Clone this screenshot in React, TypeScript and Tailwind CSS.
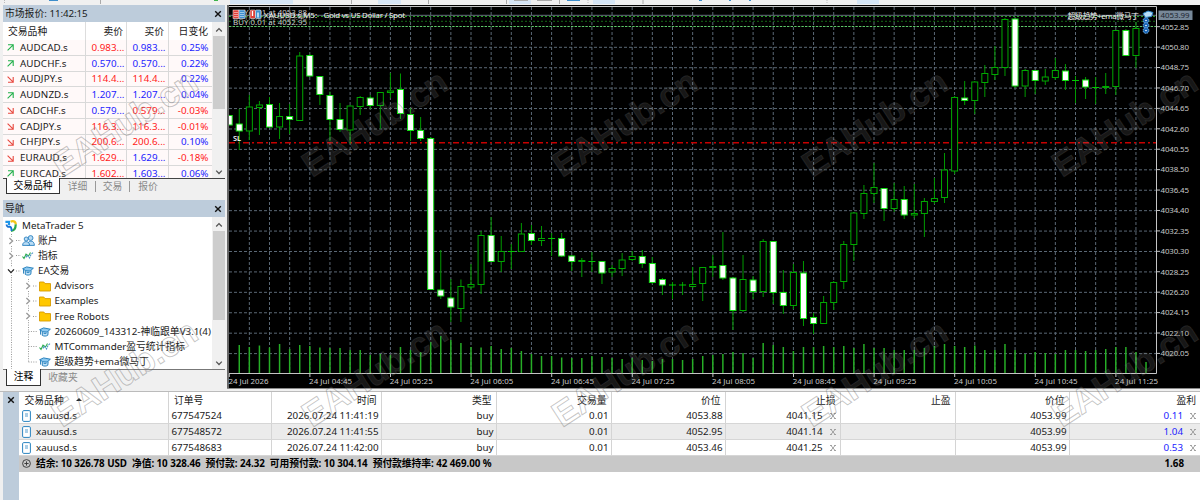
import { ReactNode } from 'react'
import clsx from 'clsx'

type Quote = [symbol: string, up: boolean, bid: string, bidUp: boolean, ask: string, askUp: boolean, change: string]

const quotes: Quote[] = [
  ['AUDCAD.s', true, '0.983...', false, '0.983...', true, '0.25%'],
  ['AUDCHF.s', true, '0.570...', true, '0.570...', true, '0.22%'],
  ['AUDJPY.s', false, '114.4...', false, '114.4...', false, '0.22%'],
  ['AUDNZD.s', true, '1.207...', true, '1.207...', true, '0.04%'],
  ['CADCHF.s', false, '0.579...', true, '0.579...', false, '-0.03%'],
  ['CADJPY.s', false, '116.3...', false, '116.3...', false, '-0.01%'],
  ['CHFJPY.s', false, '200.6...', false, '200.6...', false, '0.10%'],
  ['EURAUD.s', false, '1.629...', false, '1.629...', true, '-0.18%'],
  ['EURCAD.s', true, '1.602...', false, '1.603...', true, '0.06%'],
]

// [high, top, bottom, low, filled] in chart pixels
const candles: [number, number, number, number, number][] = [
  [115, 115.5, 125, 125, 1], [109, 124, 131, 150, 1], [95, 107, 131, 140, 0], [101, 105, 107.5, 135, 0],
  [97, 104.5, 127, 128, 1], [103, 116.5, 127, 139, 0], [104, 116.5, 119.5, 134, 1], [52, 56, 120.5, 121, 0],
  [54, 55.5, 76, 77, 1], [76, 76.5, 94.5, 105, 1], [91.5, 95.5, 119.5, 141, 1], [103, 119.5, 129.5, 132, 1],
  [105, 106, 130, 144, 0], [96, 97.5, 106.5, 115, 0], [95, 98, 105.5, 109, 1], [92, 92.5, 105.5, 129, 0],
  [73, 91, 92.5, 98, 0], [73.5, 89.5, 113.5, 119, 1], [108, 114.5, 130.5, 141, 1], [117, 130.5, 138.5, 141, 1],
  [137, 138.5, 289.5, 290, 1], [250, 290, 296, 299, 1], [279, 298, 307, 322, 1], [279.5, 286.5, 308.5, 322, 0],
  [264, 284.5, 287, 289, 0], [231, 235.5, 284.5, 294, 0], [217, 235.5, 261.5, 262, 1], [236, 251.5, 261.5, 272, 0],
  [244, 251.5, 251.5, 269, 0], [223, 234, 251.5, 252, 0], [225, 233.5, 240.5, 245, 1], [226, 238.5, 240.5, 246, 0],
  [233, 238.5, 238.5, 256, 0], [233, 238.5, 256, 257, 1], [255, 256, 261.5, 271, 1], [258, 260.5, 261.5, 277, 0],
  [252, 261.5, 261.5, 272, 0], [261, 261.5, 273, 284, 1], [265, 268.5, 272, 277, 0], [253, 260, 268.5, 276, 0],
  [251, 256.5, 259.5, 261, 0], [250, 256.5, 263.5, 268, 1], [257, 263.5, 282.5, 284, 1], [278, 279.5, 285, 295, 1],
  [282, 285, 285, 299, 0], [282, 285, 285, 295, 0], [267, 284.5, 286.5, 288, 0], [267, 267.5, 283.5, 301, 0],
  [255, 266.5, 267.5, 277, 0], [232, 265.5, 278, 280, 1], [277, 278, 310.5, 330, 1], [255, 279.5, 310.5, 312, 0],
  [276, 280, 291.5, 299, 1], [239, 241.5, 291.5, 297, 0], [241, 241.5, 292.5, 304, 1], [270, 292.5, 305.5, 314, 1],
  [264, 272.5, 305.5, 309, 0], [261, 273, 318.5, 326, 1], [313, 317.5, 323.5, 334, 1], [296, 302.5, 323.5, 324, 0],
  [281, 282.5, 302.5, 310, 0], [241, 244.5, 281.5, 289, 0], [212, 213, 244.5, 261, 0], [185, 193.5, 213.5, 219, 0],
  [163, 187.5, 193.5, 203, 0], [188, 188.5, 208.5, 221, 1], [183, 199.5, 208.5, 212, 0], [186, 199.5, 215, 219, 1],
  [184, 213.5, 215, 218, 0], [198, 201.5, 213.5, 237, 0], [178, 198.5, 201.5, 204, 0], [153, 170, 197.5, 203, 0],
  [96, 97.5, 171, 174, 0], [81, 98, 100.5, 105, 1], [81, 82, 100.5, 114, 0], [65, 73.5, 82.5, 97, 0],
  [46, 67.5, 74.5, 80, 0], [18, 19.5, 67.5, 76, 0], [18, 19, 86, 88, 1], [69, 70.5, 86, 97, 0],
  [70, 70.5, 80.5, 94, 1], [69, 77, 81, 85, 0], [58, 70.5, 77.5, 80, 0], [64, 71, 80.5, 90, 1],
  [76, 80.5, 80.5, 103, 0], [77, 80, 87, 99, 1], [77, 87.5, 87.5, 104, 0], [73, 86.5, 87.5, 94, 0],
  [30, 30.5, 86.5, 95, 0], [29, 30.5, 55.5, 56, 1], [22, 28.5, 55.5, 68, 0],
]

const volumes = [
  345, 347, 345.5, 347.5, 344, 349, 345, 346, 347.5, 348, 348, 350, 350, 355, 354, 355, 347, 350, 352, 342, 336, 340,
  343, 347, 347.5, 346, 349, 348, 351, 354, 356, 356, 357.5, 358, 358, 356, 357, 358, 359, 358, 360, 361, 359, 359,
  360, 359, 356, 355, 354, 352, 353, 358, 343, 345, 347, 351, 347, 347, 346, 347, 346, 348, 344, 348, 348, 350, 350,
  350, 348, 346, 344, 346, 347, 345.5, 350, 350, 344, 350, 354, 352, 353, 354, 350, 350, 351, 350, 349, 347, 347, 352,
  362,
]

const times = ['2026', '04:45', '05:25', '06:05', '06:45', '07:25', '08:05', '08:45', '09:25', '10:05', '10:45', '11:25']

const barX = (i: number) => 229.2 + i * 10.075

const CloseIcon = ({ className }: { className?: string }) => (
  <svg className={clsx('size-2 shrink-0', className)} viewBox="0 0 8 8" stroke="#111" strokeWidth="1.4">
    <path d="M1.2 1.2 6.8 6.8M6.8 1.2 1.2 6.8" />
  </svg>
)

const Chevron = ({ d, color = '#555' }: { d: string; color?: string }) => (
  <svg className="size-[8px] shrink-0" viewBox="0 0 8 8" fill="none" stroke={color} strokeWidth="1.3">
    <path d={d} />
  </svg>
)

const Arrow = ({ up }: { up: boolean }) => (
  <svg
    className="ml-[4px] mr-[6px] size-[7px] shrink-0"
    viewBox="0 0 7 7"
    fill="none"
    stroke={up ? '#22b04b' : '#e8483f'}
    strokeWidth="1.1"
  >
    <path d={up ? 'M1 .8H6.2V6M6.2 .8.6 6.4' : 'M1 6.2H6.2V1M6.2 6.2.6.6'} />
  </svg>
)

const CapIcon = () => (
  <svg className="h-[10px] w-[12px]" viewBox="0 0 13 11" fill="#8cc8f0" stroke="#1878b8" strokeWidth="1">
    <path d="M3.5 5V9.2C5.5 10.4 8 10.2 9.6 9L10 5" fill="#c2e2f8" />
    <path d="M.6 3 5 1 12.4 2.4 8.8 5.6 4 5.2Z" />
    <path d="M1.6 3.6V8.4M5 7H8" fill="none" />
  </svg>
)

const WaveIcon = () => (
  <svg className="h-[9px] w-[12px]" viewBox="0 0 12 9" fill="none" strokeWidth="1.1">
    <path d="M.5 5.5 2 7.5 4 3.2 6.5 5 8.5 1.5" stroke="#2fae50" />
    <path d="M4 6.5 5 4 7.5 7 9 3.5 11.5 1" stroke="#4a94c4" strokeDasharray="2 .8" />
  </svg>
)

const FolderIcon = () => (
  <svg className="h-[11px] w-[12px]" viewBox="0 0 12 11" fill="#ffc800" stroke="#d89c00" strokeWidth=".9">
    <path d="M.5 1H4.8L6 2.6H11.5V10H.5Z" />
  </svg>
)

const UsersIcon = () => (
  <svg className="h-[11px] w-[13px]" viewBox="0 0 13 11" fill="#b9dcf5" stroke="#2a80bf" strokeWidth=".9">
    <circle cx="8.6" cy="3" r="2.4" />
    <path d="M5.5 10.4C5.5 4.6 12.4 4.6 12.4 10.4Z" />
    <circle cx="4.2" cy="4" r="2" />
    <path d="M.6 10.4C.6 5.4 7.6 5.4 7.6 10.4Z" />
  </svg>
)

const LogoIcon = () => (
  <svg className="size-[12px]" viewBox="0 0 12 12" fill="none" strokeWidth="2.2">
    <path d="M.4 1.8H4V5.2" stroke="#1e96e8" />
    <path d="M5.6 1.8C7.2 .8 10.8 .8 10.8 4.6" stroke="#f5c518" />
    <path d="M10.6 4.4C10.8 7.6 9.6 10.4 6 10.8" stroke="#2aa84a" />
    <path d="M1.6 4.6C1.6 6.4 3 7 4.6 6.8C6 6.8 6.6 7.4 6.6 11" stroke="#1773d6" strokeWidth="1.9" />
  </svg>
)

const PanelTitle = ({ children }: { children: ReactNode }) => (
  <div className="flex h-[17px] shrink-0 items-center justify-between bg-[#bdccdb] pl-[2px] pr-[3px]">
    <span>{children}</span>
    <CloseIcon />
  </div>
)

const ScrollBar = ({ thumb }: { thumb: string }) => (
  <div className="flex w-[13px] shrink-0 flex-col items-center justify-between bg-[#f0f0f0] pb-[2px] pt-[4px]">
    <Chevron d="M1.2 5.5 4 2.6 6.8 5.5" />
    <div className={clsx('mb-auto mt-[2px] w-[12px] bg-[#cdcdcd]', thumb)} />
    <Chevron d="M1.2 2.6 4 5.5 6.8 2.6" />
  </div>
)

const MarketWatch = () => (
  <section className="flex h-[189px] flex-col pl-[3px] pr-[2px]">
    <PanelTitle>
      市场报价: <span className="tracking-[-0.1px]">11:42:15</span>
    </PanelTitle>
    <div className="flex h-[156px] shrink-0 overflow-hidden bg-white">
      <div className="flex-1">
        <div className="flex h-[18px] items-center">
          <span className="w-[82px] pl-[5px] pt-[2px]">交易品种</span>
          <span className="flex h-full w-[41px] items-center justify-end border-l border-[#ddd] pr-[3px] pt-[2px]">卖价</span>
          <span className="flex h-full w-[42px] items-center justify-end border-l border-[#ddd] pr-[4px] pt-[2px]">买价</span>
          <span className="flex h-full w-[44px] items-center justify-end border-l border-[#ddd] pr-[4px] pt-[2px]">日变化</span>
        </div>
        {quotes.map(([symbol, up, bid, bidUp, ask, askUp, change]) => (
          <div key={symbol} className="flex h-[15.75px] items-center border-b border-[#d9d9d9] bg-[#fff9f9]">
            <span className="flex w-[82px] items-center pt-px tracking-[0.1px]">
              <Arrow up={up} />
              {symbol}
            </span>
            <span
              className={clsx(
                'flex h-full w-[41px] items-center border-l border-[#d9d9d9] pl-[5.5px] pt-px',
                bidUp ? 'text-[#2222ff]' : 'text-[#ff1a1a]',
              )}
            >
              {bid}
            </span>
            <span
              className={clsx(
                'flex h-full w-[42px] items-center border-l border-[#d9d9d9] pl-[5.5px] pt-px',
                askUp ? 'text-[#2222ff]' : 'text-[#ff1a1a]',
              )}
            >
              {ask}
            </span>
            <span
              className={clsx(
                'flex h-full w-[44px] items-center justify-end border-l border-[#d9d9d9] pr-[3.5px] pt-px',
                change.startsWith('-') ? 'text-[#ff1a1a]' : 'text-[#2222ff]',
              )}
            >
              {change}
            </span>
          </div>
        ))}
      </div>
      <ScrollBar thumb="h-[73px]" />
    </div>
    <div className="flex h-[16px] shrink-0 border-t border-[#444] text-[#8a8a8a]">
      <span className="-mt-px ml-[3px] flex w-[54px] items-center justify-center border border-t-0 border-[#333] bg-white text-black">
        交易品种
      </span>
      <span className="my-[2px] flex w-[36px] items-center justify-center border-r border-[#999]">详细</span>
      <span className="my-[2px] flex w-[34px] items-center justify-center border-r border-[#999]">交易</span>
      <span className="my-[2px] flex w-[36px] items-center justify-center">报价</span>
    </div>
  </section>
)

const nodes: { label: string; icon: ReactNode; level: number; chevron?: string }[] = [
  { label: 'MetaTrader 5', icon: <LogoIcon />, level: 0 },
  { label: '账户', icon: <UsersIcon />, level: 1, chevron: 'M2.4 1 5.6 4 2.4 7' },
  { label: '指标', icon: <WaveIcon />, level: 1, chevron: 'M2.4 1 5.6 4 2.4 7' },
  { label: 'EA交易', icon: <CapIcon />, level: 1, chevron: 'M1 2.4 4 5.6 7 2.4' },
  { label: 'Advisors', icon: <FolderIcon />, level: 2, chevron: 'M2.4 1 5.6 4 2.4 7' },
  { label: 'Examples', icon: <FolderIcon />, level: 2, chevron: 'M2.4 1 5.6 4 2.4 7' },
  { label: 'Free Robots', icon: <FolderIcon />, level: 2, chevron: 'M2.4 1 5.6 4 2.4 7' },
  { label: '20260609_143312-神临跟单V3.1(4)', icon: <CapIcon />, level: 2 },
  { label: 'MTCommander盈亏统计指标', icon: <WaveIcon />, level: 2 },
  { label: '超级趋势+ema微马丁', icon: <CapIcon />, level: 2 },
]

const Navigator = () => (
  <section className="mt-[6px] flex h-[186px] flex-col pl-[3px] pr-[2px]">
    <PanelTitle>导航</PanelTitle>
    <div className="relative flex h-[152px] shrink-0 overflow-hidden bg-white">
      <svg className="absolute left-0 top-0 h-[152px] w-[60px]" stroke="#999" strokeDasharray="1 1.4">
        <path d="M8.5 17V152M25.5 62V145M25.5 114.5H34M25.5 129.5H34M25.5 145H34M13 23.5H18M13 38.5H18M13 54H18M30 69H34M30 84H34M30 99.5H34" />
      </svg>
      <div className="relative flex-1 pt-px">
        {nodes.map(({ label, icon, level, chevron }) => (
          <div
            key={label}
            className={clsx('flex h-[15.15px] items-center whitespace-nowrap', level === 1 && 'pl-[4px]', level === 2 && 'pl-[20.5px]')}
          >
            {level > 0 && (
              <span className="mr-[6px] flex w-[8px]">
                {chevron && (
                  <span className="bg-white">
                    <Chevron d={chevron} color={label === 'EA交易' ? '#222' : '#999'} />
                  </span>
                )}
              </span>
            )}
            <span className={clsx('flex w-[14px] justify-center', level ? 'mr-[3px]' : 'ml-[1px] mr-[4px]')}>{icon}</span>
            <span>{label}</span>
          </div>
        ))}
      </div>
      <ScrollBar thumb="h-[89px]" />
    </div>
    <div className="flex h-[17px] shrink-0 border-t border-[#777] text-[#8a8a8a]">
      <span className="-mt-px ml-[3px] flex w-[35px] items-center justify-center border border-t-0 border-[#333] bg-white text-black">
        注释
      </span>
      <span className="flex w-[44px] items-center justify-center">收藏夹</span>
    </div>
  </section>
)

const Chart = () => (
  <svg className="h-[384px] w-[973px] shrink-0 bg-black" viewBox="227 5 973 384">
    <g stroke="#5b6875" strokeWidth="1" strokeDasharray="3 2">
      {Array.from({ length: 45 }, (_, i) => (
        <line key={i} x1={barX(2 + i * 2)} x2={barX(2 + i * 2)} y1="7" y2="373" />
      ))}
      {Array.from({ length: 16 }, (_, i) => (
        <line key={i} x1="229" x2="1156" y1={47.3 + i * 20.42} y2={47.3 + i * 20.42} />
      ))}
    </g>
    <g stroke="#26ae26" strokeWidth="1.5">
      {volumes.map((y, i) => (
        <line key={i} x1={barX(i + 1)} x2={barX(i + 1)} y1={y} y2="373" />
      ))}
    </g>
    <path d="M229 15.3H1156" stroke="#66707c" />
    <path d="M229 16.5H1156" stroke="#22a022" strokeDasharray="2 2" />
    <path d="M229 21.3H1156" stroke="#146a14" strokeDasharray="2 2" />
    <path d="M229 26.5H1156" stroke="#5fc86a" strokeDasharray="2.4 1.2" />
    <path d="M229 142.7H1156" stroke="#c80000" strokeWidth="1.5" strokeDasharray="6 3 2 3" />
    <g strokeWidth="1">
      {candles.map(([high, top, bottom, low, filled], i) => {
        const x = barX(i)
        return (
          <g key={i} stroke={filled ? '#14dc14' : '#00a800'}>
            <path d={`M${x} ${high}V${top}M${x} ${bottom}V${low}`} stroke="#009a00" />
            {top === bottom ? (
              <path d={`M${x - 3.5} ${top}H${x + 3.5}`} stroke="#00c800" />
            ) : (
              <rect x={x - 3} y={top} width="6" height={bottom - top} fill={filled ? '#fff' : '#000'} />
            )}
          </g>
        )
      })}
    </g>
    <path d="M227 5H229V388H227Z" fill="#666" />
    <path d="M229 6.5H1156.5V373.5H229" fill="none" stroke="#c4c4c4" />
    <g fill="#c8c8c8" fontSize="7.9" fontFamily="'Noto Sans', 'Noto Sans CJK SC', sans-serif">
      {Array.from({ length: 17 }, (_, i) => (
        <g key={i}>
          <path d={`M1157 ${26.7 + i * 20.42}H1160`} stroke="#c4c4c4" />
          <text x="1160.5" y={29.5 + i * 20.42} textLength="28.5">
            {(4052.85 - i * 2.05).toFixed(2)}
          </text>
        </g>
      ))}
      {times.map((t, i) => (
        <g key={t}>
          <path d={`M${229.3 + i * 80.6} 374V377`} stroke="#c4c4c4" />
          <text x={228.5 + i * 80.6} y="383.5" textLength={i ? 43 : 40}>
            24 Jul {t}
          </text>
        </g>
      ))}
      <rect x="1158.5" y="10.5" width="34" height="9.5" fill="#778899" />
      <text x="1160.5" y="18.2" fill="#1c2530" textLength="29">4053.99</text>
      <text x="233" y="15" textLength="74">BUY 0.01 at 4053.88</text>
      <text x="233" y="19.5" textLength="74" opacity=".6">BUY 0.01 at 4053.46</text>
      <text x="233" y="24.6" textLength="74">BUY 0.01 at 4052.95</text>
      <g stroke="#fff" strokeWidth=".5">
        <rect x="233" y="10" width="6" height="8.5" fill="#e0403a" />
        <rect x="239" y="10" width="6" height="8.5" fill="#3d8fd0" />
        <path d="M234 12.5H238M234 14.5H238M234 16.5H238M240 12.5H244M240 14.5H244M240 16.5H244" />
        <rect x="250" y="10" width="5.5" height="8.5" rx="1" fill="#e0403a" />
        <rect x="255.5" y="10" width="5.5" height="8.5" rx="1" fill="#3d8fd0" />
        <path d="M252.5 11V16M258 12.5V17.5" strokeWidth="1.3" />
      </g>
      <text x="264" y="18" textLength="53" fill="#f2f2f2">XAUUSD.s,M5:</text>
      <text x="323.5" y="18" textLength="81.5" fill="#f2f2f2">Gold vs US Dollar / Spot</text>
      <text x="1067.5" y="18.7" textLength="71.5" fill="#f2f2f2">超级趋势+ema微马丁</text>
      <text x="233" y="141.2" fontSize="7.4" fontWeight="600" fill="#fff">SL</text>
    </g>
    <path d="M1143 13.5 1148 11 1153 12.5 1151.5 16.5 1145.5 17.5Z" fill="#b8def8" stroke="#2a84c8" />
    {[20.5, 25.5, 30.5].map((y) => (
      <g key={y}>
        <circle cx="1146" cy={y} r="2.9" fill="#1763b5" stroke="#8cc4f0" strokeWidth=".8" strokeDasharray="1.5 .8" />
        <circle cx="1146" cy={y} r=".8" fill="#fff" />
      </g>
    ))}
    <path d="M227 388.5H1200" stroke="#8a8a8a" />
  </svg>
)

const columns = [
  'w-[149.5px]',
  'w-[103px]',
  'w-[110px]',
  'w-[115px]',
  'w-[115px]',
  'w-[114px]',
  'w-[115px]',
  'w-[115px]',
  'w-[114px]',
  'flex-1',
]
const headings = ['交易品种', '订单号', '时间', '类型', '交易量', '价位', '止损', '止盈', '价位', '盈利']

const trades = [
  ['xauusd.s', '677547524', '2026.07.24 11:41:19', 'buy', '0.01', '4053.88', '4041.15', '', '4053.99', '0.11'],
  ['xauusd.s', '677548572', '2026.07.24 11:41:55', 'buy', '0.01', '4052.95', '4041.14', '', '4053.99', '1.04'],
  ['xauusd.s', '677548683', '2026.07.24 11:42:00', 'buy', '0.01', '4053.46', '4041.25', '', '4053.99', '0.53'],
]

const RemoveMark = () => (
  <svg className="ml-[7px] size-[6px]" viewBox="0 0 6 6" stroke="#999" strokeWidth=".9">
    <path d="M1 .6 5 5.4M5 .6 1 5.4M0 .5H2M4 .5H6M0 5.5H2M4 5.5H6" />
  </svg>
)

const Terminal = () => (
  <section className="flex h-[109px] border-t border-[#bbb] pl-[3px]">
    <div className="flex w-[16px] shrink-0 justify-center bg-[#bdccdb] pt-[4px]">
      <CloseIcon />
    </div>
    <div className="flex-1 bg-white">
      <div className="flex h-[16.5px]">
        {headings.map((heading, i) => (
          <span
            key={i}
            className={clsx(
              'flex items-center pt-px',
              columns[i],
              i < 9 && 'border-r border-[#d4d4d4]',
              i > 1 ? 'justify-end pr-[4px]' : 'pl-[5.5px]',
            )}
          >
            {heading}
            {i === 0 && (
              <svg className="mb-[3px] ml-[12px] h-[3px] w-[6px]" viewBox="0 0 6 3">
                <path d="M0 3 3 0 6 3Z" fill="#222" />
              </svg>
            )}
          </span>
        ))}
      </div>
      {trades.map((trade, row) => (
        <div key={trade[1]} className={clsx('flex h-[15.75px] border-b border-[#d6d6d6]', row === 1 && 'bg-[#ebebeb]')}>
          {trade.map((cell, i) => (
            <span
              key={i}
              className={clsx(
                'flex items-center pt-px',
                columns[i],
                i < 9 && 'border-r border-[#d4d4d4]',
                i < 2 && 'pl-[3px]',
                i > 1 && (i === 6 || i === 9 ? 'justify-end pr-[4px]' : 'justify-end pr-[2px]'),
                i === 9 && 'text-[#2222ff]',
              )}
            >
              {i === 0 && (
                <svg className="mr-[5px] h-[12px] w-[9px]" viewBox="0 0 9 12" fill="#fff" stroke="#2a84c0">
                  <rect x=".6" y=".6" width="7.8" height="10.8" rx="1.2" />
                  <path d="M3 4H6M3 6H6" strokeWidth=".8" />
                </svg>
              )}
              {cell}
              {(i === 6 || i === 9) && <RemoveMark />}
            </span>
          ))}
        </div>
      ))}
      <div className="flex h-[16px] items-center bg-[#c8c8c8] pl-[3px] pr-[16px] font-bold text-black">
        <svg className="mr-[5px] size-[9px]" viewBox="0 0 9 9" fill="none" stroke="#333" strokeWidth=".9">
          <circle cx="4.5" cy="4.5" r="3.9" />
          <path d="M2.4 4.5H6.6M4.5 2.4V6.6" />
        </svg>
        <span className="whitespace-pre tracking-[-0.06px]">
          结余: 10 326.78 USD{'  '}净值: 10 328.46{'  '}预付款: 24.32{'  '}可用预付款: 10 304.14{'  '}预付款维持率: 42 469.00 %
        </span>
        <span className="ml-auto">1.68</span>
      </div>
    </div>
  </section>
)

const Toolbar = () => (
  <svg className="h-[5px] w-[1200px] shrink-0" viewBox="0 0 1200 5">
    <path d="M230 0H293V4H230ZM378 0H401V4H378ZM509 0H531V4H509ZM593 0H615V4H593ZM857 0H879V4H857Z" fill="#d5e5f5" />
    <path d="M100.5 0V4M351.5 0V4M428.5 0V4M506.5 0V4M559.5 0V4M643 0V4" stroke="#aaa" />
    <path d="M4.5 0V4M588 0V4M827 0V4" stroke="#bbb" strokeDasharray="1 1" />
    <path d="M514 .5H528M537 .5H552" stroke="#aaa" />
    <path d="M49 .5H58M567 .5H580M699 .5H702M729 .5H731M749 .5H751" stroke="#3c8dcb" />
    <path d="M214 .5H218" stroke="#3cb44b" />
  </svg>
)

const Watermark = () => (
  <svg className="pointer-events-none absolute left-0 top-0 h-[500px] w-[1200px]" viewBox="0 0 1200 500">
    <g
      fill="rgba(255,255,255,0.1)"
      stroke="rgba(80,80,80,0.32)"
      strokeWidth="1"
      fontFamily="'Liberation Sans', sans-serif"
      fontWeight="700"
      fontSize="35"
    >
      {[178, 428].map((y) =>
        [62, 312, 562, 812, 1062].map((x) => (
          <text key={`${x}-${y}`} transform={`translate(${x} ${y}) rotate(-33)`} textLength="165">
            EAHub.cn
          </text>
        )),
      )}
    </g>
  </svg>
)

export default function App() {
  return (
    <main className="relative flex h-[500px] w-[1200px] flex-col overflow-hidden bg-[#f0f0f0] font-['Noto_Sans','Noto_Sans_CJK_SC',sans-serif] text-[9.8px] leading-none text-[#1a1a1a]">
      <Toolbar />
      <div className="flex h-[386px]">
        <aside className="w-[227px] shrink-0">
          <MarketWatch />
          <Navigator />
        </aside>
        <Chart />
      </div>
      <Terminal />
      <Watermark />
    </main>
  )
}
